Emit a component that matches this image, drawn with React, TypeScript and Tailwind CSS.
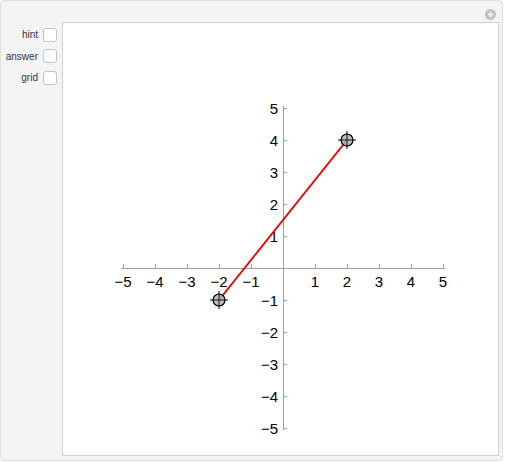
import React from 'react'

const OX = 283
const OY = 268
const U = 32
const ticks = [-5, -4, -3, -2, -1, 1, 2, 3, 4, 5]

const px = (x: number) => OX + x * U
const py = (y: number) => OY - y * U

function fmt(n: number) {
  return n < 0 ? `\u2212${-n}` : `${n}`
}

function Locator({ x, y }: { x: number; y: number }) {
  const cx = px(x)
  const cy = py(y)
  return (
    <g>
      <line x1={cx - 9} y1={cy} x2={cx + 9} y2={cy} stroke="#000" strokeWidth={1} />
      <line x1={cx} y1={cy - 9} x2={cx} y2={cy + 9} stroke="#000" strokeWidth={1} />
      <circle cx={cx} cy={cy} r={6} fill="#b4b4b4" fillOpacity={0.85} stroke="#000" strokeWidth={1.2} />
      <line x1={cx - 6} y1={cy} x2={cx + 6} y2={cy} stroke="#000" strokeWidth={0.8} />
      <line x1={cx} y1={cy - 6} x2={cx} y2={cy + 6} stroke="#000" strokeWidth={0.8} />
    </g>
  )
}

function Check({ label }: { label: string }) {
  return (
    <div className="flex h-[21.5px] items-center justify-end gap-[5px]">
      <span className="text-[10px] text-[#333]">{label}</span>
      <span className="h-[14px] w-[14px] rounded-[3px] border border-[#c4c4c4] bg-white" />
    </div>
  )
}

export default function App() {
  return (
    <div className="h-[462px] w-[505px] bg-white" style={{ fontFamily: '"Liberation Sans", Arial, sans-serif' }}>
      <div className="relative flex h-[461px] w-[503px] rounded-[4px] border border-[#dedede] bg-[#f4f4f4] pt-[21px]">
        {/* reset button */}
        <div className="absolute right-[6px] top-[8px] flex h-[11px] w-[11px] items-center justify-center rounded-full bg-[#c2c2c2]">
          <svg width="7" height="7" viewBox="0 0 7 7">
            <path d="M3.5 1v5M1 3.5h5" stroke="#fff" strokeWidth="1.4" />
          </svg>
        </div>

        {/* controls */}
        <div className="flex w-[61px] flex-col pr-[5px] pt-[2px]">
          <Check label="hint" />
          <Check label="answer" />
          <Check label="grid" />
        </div>

        {/* plot */}
        <div className="h-[434px] w-[437px] border border-[#cfcfcf] bg-white">
          <svg width="435" height="432" viewBox="0 0 435 432">
            <g transform="translate(-63,-23)" fontFamily='"Liberation Sans", Arial, sans-serif' fontSize="15" fill="#000">
              {/* axes */}
              <line x1={px(-5) - 2} y1={OY + 0.5} x2={px(5) + 2} y2={OY + 0.5} stroke="#a0a0a0" strokeWidth={1} />
              <line x1={OX + 0.5} y1={py(5) - 2} x2={OX + 0.5} y2={py(-5) + 2} stroke="#a0a0a0" strokeWidth={1} />
              {ticks.map((t) => (
                <g key={`x${t}`}>
                  <line x1={px(t) + 0.5} y1={OY} x2={px(t) + 0.5} y2={OY - 4} stroke="#a0a0a0" strokeWidth={1} />
                  <text x={px(t)} y={OY + 19} textAnchor="middle">
                    {fmt(t)}
                  </text>
                </g>
              ))}
              {ticks.map((t) => (
                <g key={`y${t}`}>
                  <line x1={OX} y1={py(t) + 0.5} x2={OX + 4} y2={py(t) + 0.5} stroke="#a0a0a0" strokeWidth={1} />
                  <text x={OX - 5} y={py(t) + 5.5} textAnchor="end">
                    {fmt(t)}
                  </text>
                </g>
              ))}

              {/* segment */}
              <line x1={px(-2)} y1={py(-1)} x2={px(2)} y2={py(4)} stroke="#ee0000" strokeWidth={2} />

              <Locator x={-2} y={-1} />
              <Locator x={2} y={4} />
            </g>
          </svg>
        </div>
      </div>
    </div>
  )
}
